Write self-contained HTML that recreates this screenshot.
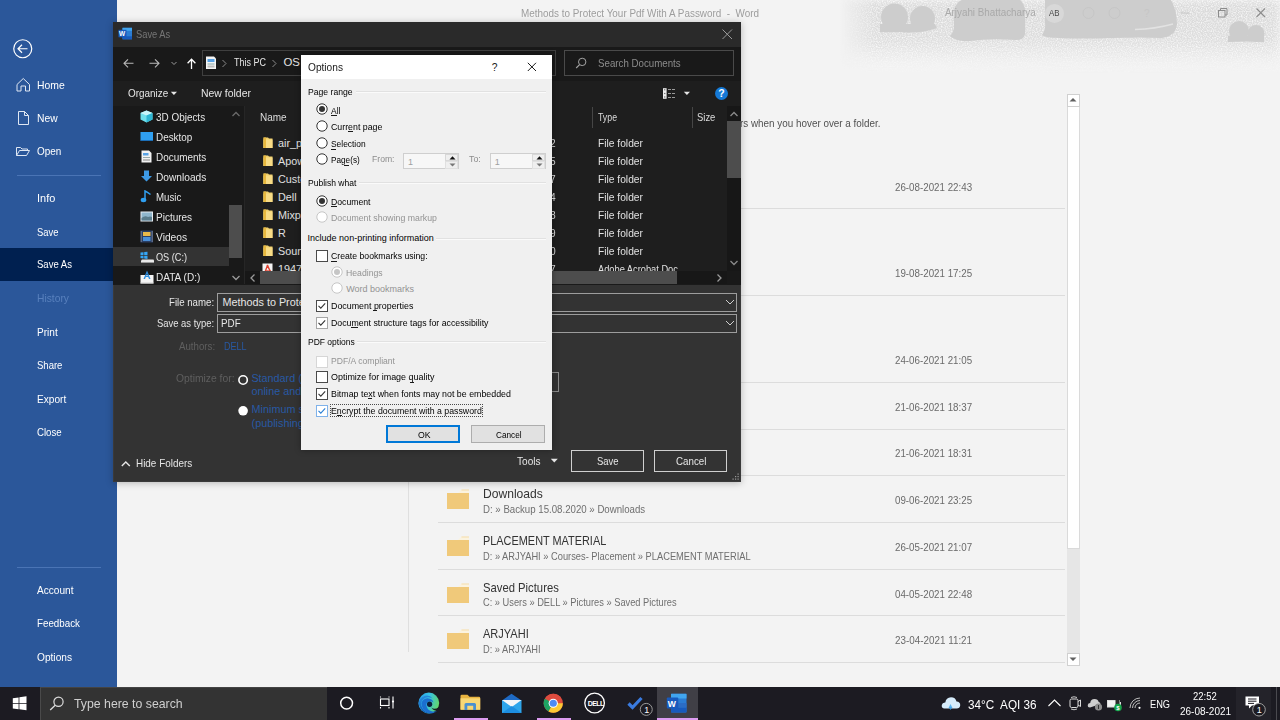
<!DOCTYPE html>
<html><head><meta charset="utf-8"><style>
*{margin:0;padding:0;box-sizing:border-box}
html,body{width:1280px;height:720px;overflow:hidden;background:#f3f3f3;font-family:"Liberation Sans",sans-serif}
.t{position:absolute;white-space:pre;line-height:1}
.r{position:absolute}
.clip{position:absolute;overflow:hidden}
</style></head><body>
<svg class="r" style="left:840px;top:0px" width="440" height="75" viewBox="0 0 440 75">
<defs><filter id="bl" x="-10%" y="-10%" width="120%" height="120%"><feGaussianBlur stdDeviation="0.5"/></filter>
<filter id="bl2"><feGaussianBlur stdDeviation="4"/></filter>
<linearGradient id="fadeg" x1="0" y1="0" x2="0" y2="1"><stop offset="0" stop-color="#d9d9d9"/><stop offset="0.6" stop-color="#dedede"/><stop offset="1" stop-color="#f3f3f3"/></linearGradient>
<linearGradient id="fadeh" x1="0" y1="0" x2="1" y2="0"><stop offset="0" stop-color="#fff" stop-opacity="0"/><stop offset="0.08" stop-color="#fff" stop-opacity="1"/></linearGradient>
<mask id="mh"><rect x="0" y="0" width="440" height="75" fill="url(#fadeh)"/></mask></defs>
<filter id="nz" x="0" y="0" width="100%" height="100%"><feTurbulence type="fractalNoise" baseFrequency="0.8" numOctaves="1" seed="3"/><feColorMatrix values="0 0 0 0 1  0 0 0 0 1  0 0 0 0 1  0 0 0 -2.2 1.35"/></filter>
<linearGradient id="nzg" x1="0" y1="0" x2="0" y2="1"><stop offset="0" stop-color="#fff" stop-opacity="0.9"/><stop offset="0.7" stop-color="#fff" stop-opacity="0.8"/><stop offset="1" stop-color="#fff" stop-opacity="0.1"/></linearGradient>
<mask id="mnz"><rect x="0" y="0" width="440" height="75" fill="url(#nzg)"/></mask>
<g mask="url(#mh)"><path d="M0 0 H440 V62 Q300 70 150 64 Q60 58 0 62 Z" fill="url(#fadeg)" filter="url(#bl2)"/></g>
<g mask="url(#mh)"><rect x="0" y="0" width="440" height="72" filter="url(#nz)" mask="url(#mnz)"/></g>
<g fill="#cdcdcd" filter="url(#bl)">
<circle cx="54.5" cy="17" r="13.5"/><circle cx="82.5" cy="18.5" r="12.5"/>
<path d="M40 24 H95 L97 28 Q80 34 60 32 Q46 32 40 32 Z"/>
<path d="M128 -2 H178 Q186 4 185 14 V34 Q184 40 176 40 Q150 38 130 41 Q116 42 110 36 Q114 32 114 26 V12 Q115 0 128 -2 Z"/>
<path d="M205 -2 H330 Q337 10 337 24 Q336 36 322 38 Q300 37 270 38 Q240 39 220 38 Q205 38 202 35 Q206 30 205 22 Z"/>
<circle cx="399" cy="31" r="10"/><circle cx="416" cy="33.5" r="8.5"/>
<path d="M388 36 H424 V42 Q405 41 388 42 Z"/>
</g>
<path d="M295 29.5 Q315 29 333 24" stroke="#e2e2e2" stroke-width="1.3" fill="none"/>
</svg>
<div id="t0" class="t " style="left:520.60px;top:7.67px;font-size:10.9px;color:#9d9d9d;transform:scaleX(0.9091);transform-origin:0 0;">Methods to Protect Your Pdf With A Password  -  Word</div>
<div id="t1" class="t " style="left:945.25px;top:7.27px;font-size:10.9px;color:#a9a9a9;transform:scaleX(0.9024);transform-origin:0 0;">Arjyahi Bhattacharya</div>
<div class="r" style="left:1045px;top:3.5px;width:19px;height:19px;border-radius:50%;background:#d8d8d8"></div>
<div id="t2" class="t " style="left:1049.20px;top:9.22px;font-size:8.6px;color:#4a4a4a;transform:scaleX(0.9202);transform-origin:0 0;">AB</div>
<svg class="r" style="left:1082px;top:6px;" width="80" height="14" viewBox="0 0 80 14"><circle cx="6.5" cy="7" r="5.5" fill="none" stroke="#c6c6c6"/><circle cx="32.5" cy="7" r="5.5" fill="none" stroke="#c6c6c6"/><text x="62" y="11" font-size="10" fill="#c6c6c6" font-family="Liberation Sans">?</text></svg>
<svg class="r" style="left:1176px;top:4px;" width="100" height="18" viewBox="0 0 100 18"><line x1="4.5" y1="9" x2="13.5" y2="9" stroke="#c4c4c4"/><rect x="42.5" y="6.5" width="6.5" height="6.5" fill="none" stroke="#8c8c8c"/><path d="M44.5 6.5 V4.5 H51 V11 H49" fill="none" stroke="#8c8c8c"/><path d="M80.5 4.5 L89 13 M89 4.5 L80.5 13" stroke="#8c8c8c" stroke-width="1.1"/></svg>
<div class="r" style="left:438px;top:208px;width:627px;height:1px;background:#dcdcdc;"></div>
<div class="r" style="left:438px;top:295px;width:627px;height:1px;background:#dcdcdc;"></div>
<div class="r" style="left:438px;top:382px;width:627px;height:1px;background:#dcdcdc;"></div>
<div class="r" style="left:438px;top:429px;width:627px;height:1px;background:#dcdcdc;"></div>
<div class="r" style="left:438px;top:475px;width:627px;height:1px;background:#dcdcdc;"></div>
<div class="r" style="left:438px;top:522px;width:627px;height:1px;background:#dcdcdc;"></div>
<div class="r" style="left:438px;top:569px;width:627px;height:1px;background:#dcdcdc;"></div>
<div class="r" style="left:438px;top:615px;width:627px;height:1px;background:#dcdcdc;"></div>
<div class="r" style="left:438px;top:662px;width:627px;height:1px;background:#dcdcdc;"></div>
<div class="r" style="left:408px;top:120px;width:1px;height:532px;background:#dfdfdf;"></div>
<div id="t3" class="t " style="left:740.20px;top:117.76px;font-size:10.8px;color:#505050;transform:scaleX(0.9144);transform-origin:0 0;">rs when you hover over a folder.</div>
<div id="t4" class="t " style="left:894.60px;top:182.88px;font-size:10.3px;color:#6a6a6a;transform:scaleX(0.9480);transform-origin:0 0;">26-08-2021 22:43</div>
<div id="t5" class="t " style="left:894.60px;top:269.28px;font-size:10.3px;color:#6a6a6a;transform:scaleX(0.9480);transform-origin:0 0;">19-08-2021 17:25</div>
<div id="t6" class="t " style="left:894.60px;top:356.08px;font-size:10.3px;color:#6a6a6a;transform:scaleX(0.9480);transform-origin:0 0;">24-06-2021 21:05</div>
<div id="t7" class="t " style="left:894.60px;top:402.68px;font-size:10.3px;color:#6a6a6a;transform:scaleX(0.9480);transform-origin:0 0;">21-06-2021 18:37</div>
<div id="t8" class="t " style="left:894.60px;top:449.28px;font-size:10.3px;color:#6a6a6a;transform:scaleX(0.9480);transform-origin:0 0;">21-06-2021 18:31</div>
<div id="t9" class="t " style="left:894.60px;top:496.03px;font-size:10.3px;color:#6a6a6a;transform:scaleX(0.9480);transform-origin:0 0;">09-06-2021 23:25</div>
<div id="t10" class="t " style="left:894.60px;top:542.88px;font-size:10.3px;color:#6a6a6a;transform:scaleX(0.9480);transform-origin:0 0;">26-05-2021 21:07</div>
<div id="t11" class="t " style="left:894.60px;top:589.58px;font-size:10.3px;color:#6a6a6a;transform:scaleX(0.9480);transform-origin:0 0;">04-05-2021 22:48</div>
<div id="t12" class="t " style="left:894.60px;top:636.28px;font-size:10.3px;color:#6a6a6a;transform:scaleX(0.9571);transform-origin:0 0;">23-04-2021 11:21</div>
<svg class="r" style="left:447px;top:489.0px;" width="23" height="21" viewBox="0 0 23 21"><path d="M0 4 H22 V20 H0 Z" fill="#f0c97a"/><path d="M11 4 L14.5 0.5 H22 V4 Z" fill="#fbf3df"/><path d="M14.5 0.5 H22 V1.5 H14.5 Z" fill="#f0c97a" opacity="0.5"/></svg>
<div id="t13" class="t " style="left:483.10px;top:488.07px;font-size:12.2px;color:#333333;transform:scaleX(0.9925);transform-origin:0 0;">Downloads</div>
<div id="t14" class="t " style="left:483.10px;top:503.77px;font-size:10.6px;color:#6f6f6f;transform:scaleX(0.9118);transform-origin:0 0;">D: » Backup 15.08.2020 » Downloads</div>
<svg class="r" style="left:447px;top:535.75px;" width="23" height="21" viewBox="0 0 23 21"><path d="M0 4 H22 V20 H0 Z" fill="#f0c97a"/><path d="M11 4 L14.5 0.5 H22 V4 Z" fill="#fbf3df"/><path d="M14.5 0.5 H22 V1.5 H14.5 Z" fill="#f0c97a" opacity="0.5"/></svg>
<div id="t15" class="t " style="left:483.10px;top:534.82px;font-size:12.2px;color:#333333;transform:scaleX(0.8950);transform-origin:0 0;">PLACEMENT MATERIAL</div>
<div id="t16" class="t " style="left:483.10px;top:550.52px;font-size:10.6px;color:#6f6f6f;transform:scaleX(0.8776);transform-origin:0 0;">D: » ARJYAHI » Courses- Placement » PLACEMENT MATERIAL</div>
<svg class="r" style="left:447px;top:582.5px;" width="23" height="21" viewBox="0 0 23 21"><path d="M0 4 H22 V20 H0 Z" fill="#f0c97a"/><path d="M11 4 L14.5 0.5 H22 V4 Z" fill="#fbf3df"/><path d="M14.5 0.5 H22 V1.5 H14.5 Z" fill="#f0c97a" opacity="0.5"/></svg>
<div id="t17" class="t " style="left:483.10px;top:581.57px;font-size:12.2px;color:#333333;transform:scaleX(0.9246);transform-origin:0 0;">Saved Pictures</div>
<div id="t18" class="t " style="left:483.10px;top:597.27px;font-size:10.6px;color:#6f6f6f;transform:scaleX(0.8762);transform-origin:0 0;">C: » Users » DELL » Pictures » Saved Pictures</div>
<svg class="r" style="left:447px;top:629.25px;" width="23" height="21" viewBox="0 0 23 21"><path d="M0 4 H22 V20 H0 Z" fill="#f0c97a"/><path d="M11 4 L14.5 0.5 H22 V4 Z" fill="#fbf3df"/><path d="M14.5 0.5 H22 V1.5 H14.5 Z" fill="#f0c97a" opacity="0.5"/></svg>
<div id="t19" class="t " style="left:483.10px;top:628.32px;font-size:12.2px;color:#333333;transform:scaleX(0.9050);transform-origin:0 0;">ARJYAHI</div>
<div id="t20" class="t " style="left:483.10px;top:644.02px;font-size:10.6px;color:#6f6f6f;transform:scaleX(0.8768);transform-origin:0 0;">D: » ARJYAHI</div>
<div class="r" style="left:1067px;top:94px;width:12.5px;height:571px;background:#e6e6e6;"></div>
<div class="r" style="left:1066.5px;top:93.5px;width:13px;height:455px;background:#ffffff;border:1px solid #dadada"></div>
<div class="r" style="left:1066.5px;top:93.5px;width:13px;height:13px;background:#ffffff;border:1px solid #d0d0d0"></div>
<div class="r" style="left:1066.5px;top:652.5px;width:13px;height:13px;background:#ffffff;border:1px solid #d0d0d0"></div>
<svg class="r" style="left:1067px;top:94px;" width="12" height="12" viewBox="0 0 12 12"><path d="M2.5 7.5 L6 4 L9.5 7.5 Z" fill="#606060"/></svg>
<svg class="r" style="left:1067px;top:653px;" width="12" height="12" viewBox="0 0 12 12"><path d="M2.5 4.5 L6 8 L9.5 4.5 Z" fill="#606060"/></svg>
<div class="r" style="left:0px;top:0px;width:116.5px;height:687px;background:#2b579a;"></div>
<div class="r" style="left:0px;top:248px;width:116.5px;height:33px;background:#002050;"></div>
<svg class="r" style="left:12px;top:38px;" width="22" height="22" viewBox="0 0 22 22"><circle cx="10.75" cy="10.75" r="9" fill="none" stroke="#fff" stroke-width="1.2"/><path d="M6 10.75 H15.5 M10 6.75 L6 10.75 L10 14.75" fill="none" stroke="#fff" stroke-width="1.2"/></svg>
<svg class="r" style="left:15px;top:76px;" width="18" height="18" viewBox="0 0 18 18"><path d="M2 8.5 L8.25 2.5 L14.5 8.5 V15 H10.5 V10 H6 V15 H2 Z" fill="none" stroke="#dfe7f3" stroke-width="1"/></svg>
<svg class="r" style="left:16px;top:109px;" width="16" height="18" viewBox="0 0 16 18"><path d="M2.5 2.5 H8.5 L12.5 6.5 V15.5 H2.5 Z M8.5 2.5 V6.5 H12.5" fill="none" stroke="#dfe7f3" stroke-width="1"/></svg>
<svg class="r" style="left:15px;top:145px;" width="18" height="14" viewBox="0 0 18 14"><path d="M1.5 10.5 V2.5 H5.5 L7 4 H12.5 V5.5 M1.5 10.5 L4.5 5.5 H14.5 L11.5 10.5 Z" fill="none" stroke="#dfe7f3" stroke-width="1"/></svg>
<div class="r" style="left:16.5px;top:174.5px;width:84px;height:1.2px;background:#4a74b5;"></div>
<div class="r" style="left:16.5px;top:566.5px;width:84px;height:1.2px;background:#4a74b5;"></div>
<div id="t21" class="t " style="left:36.60px;top:79.86px;font-size:10.8px;color:#fff;transform:scaleX(0.9623);transform-origin:0 0;">Home</div>
<div id="t22" class="t " style="left:36.60px;top:112.86px;font-size:10.8px;color:#fff;transform:scaleX(0.9543);transform-origin:0 0;">New</div>
<div id="t23" class="t " style="left:36.60px;top:146.16px;font-size:10.8px;color:#fff;transform:scaleX(0.9195);transform-origin:0 0;">Open</div>
<div id="t24" class="t " style="left:36.60px;top:193.36px;font-size:10.8px;color:#fff;transform:scaleX(1.0139);transform-origin:0 0;">Info</div>
<div id="t25" class="t " style="left:36.60px;top:226.86px;font-size:10.8px;color:#fff;transform:scaleX(0.8699);transform-origin:0 0;">Save</div>
<div id="t26" class="t " style="left:36.60px;top:258.86px;font-size:10.8px;color:#fff;transform:scaleX(0.8812);transform-origin:0 0;">Save As</div>
<div id="t27" class="t " style="left:36.60px;top:292.86px;font-size:10.8px;color:#5880bd;transform:scaleX(0.9516);transform-origin:0 0;">History</div>
<div id="t28" class="t " style="left:36.60px;top:326.86px;font-size:10.8px;color:#fff;transform:scaleX(0.9325);transform-origin:0 0;">Print</div>
<div id="t29" class="t " style="left:36.60px;top:360.06px;font-size:10.8px;color:#fff;transform:scaleX(0.8821);transform-origin:0 0;">Share</div>
<div id="t30" class="t " style="left:36.60px;top:393.86px;font-size:10.8px;color:#fff;transform:scaleX(0.9356);transform-origin:0 0;">Export</div>
<div id="t31" class="t " style="left:36.60px;top:427.06px;font-size:10.8px;color:#fff;transform:scaleX(0.8937);transform-origin:0 0;">Close</div>
<div id="t32" class="t " style="left:36.60px;top:585.16px;font-size:10.8px;color:#fff;transform:scaleX(0.9357);transform-origin:0 0;">Account</div>
<div id="t33" class="t " style="left:36.60px;top:618.36px;font-size:10.8px;color:#fff;transform:scaleX(0.9064);transform-origin:0 0;">Feedback</div>
<div id="t34" class="t " style="left:36.60px;top:652.16px;font-size:10.8px;color:#fff;transform:scaleX(0.9407);transform-origin:0 0;">Options</div>
<div class="r" style="left:0px;top:687px;width:1280px;height:33px;background:#1c1b22;"></div>
<div class="r" style="left:40px;top:687px;width:286.5px;height:33px;background:#333333;border-left:1px solid #4a4a4a;border-top:1px solid #444"></div>
<svg class="r" style="left:12px;top:696px;" width="16" height="15" viewBox="0 0 16 15"><path d="M0.8 2.2 L6.6 1.4 V6.9 H0.8 Z M7.4 1.3 L14.5 0.3 V6.9 H7.4 Z M0.8 7.7 H6.6 V13.2 L0.8 12.4 Z M7.4 7.7 H14.5 V14.3 L7.4 13.3 Z" fill="#fff"/></svg>
<svg class="r" style="left:49px;top:696px;" width="16" height="15" viewBox="0 0 16 15"><circle cx="9.5" cy="5.8" r="4.6" fill="none" stroke="#ddd" stroke-width="1.2"/><path d="M6.2 9.2 L1.2 14" stroke="#ddd" stroke-width="1.3"/></svg>
<div id="t35" class="t " style="left:74.20px;top:696.92px;font-size:13.2px;color:#cfcfcf;transform:scaleX(0.9322);transform-origin:0 0;">Type here to search</div>
<svg class="r" style="left:338px;top:695px;" width="18" height="18" viewBox="0 0 18 18"><circle cx="8.6" cy="8.1" r="5.9" fill="none" stroke="#fff" stroke-width="1.5"/></svg>
<svg class="r" style="left:378px;top:695px;" width="18" height="16" viewBox="0 0 18 16"><rect x="2.5" y="4" width="8.5" height="6.5" fill="none" stroke="#fff" stroke-width="1.1"/><path d="M2.5 1.5 V2.5 M11 1.5 V2.5 M2.5 12 V13.5 M11 12 V13.5 M15 1.5 V13.5" stroke="#fff" stroke-width="1.1"/><circle cx="15" cy="6.5" r="1.1" fill="#fff"/></svg>
<svg class="r" style="left:418px;top:692px;" width="22" height="22" viewBox="0 0 22 22"><defs><linearGradient id="eg1" x1="0" y1="0.2" x2="1" y2="0.5"><stop offset="0" stop-color="#2aa0e8"/><stop offset="0.45" stop-color="#36c3e6"/><stop offset="1" stop-color="#62d56a"/></linearGradient><linearGradient id="eg2" x1="0" y1="0" x2="0.4" y2="1"><stop offset="0" stop-color="#2b93e6"/><stop offset="1" stop-color="#0f56b0"/></linearGradient></defs><circle cx="10.8" cy="11" r="10.4" fill="url(#eg1)"/><path d="M0.6 12 Q1 5.5 7 3.8 Q12 2.8 14.5 6.5 Q9 3.5 5 7.5 Q2 11 4 15.5 Q6.5 20.5 12.5 21.2 Q16.5 21.3 19.2 18.8 Q16.5 21.8 11 21.5 Q3 21 0.6 12 Z" fill="url(#eg2)"/><path d="M3.5 11.5 Q4.5 6.5 9.5 6.2 Q14.5 6.5 15.5 10.5 Q13 8.5 10.5 9.5 Q8 10.8 8.5 14 Q9.5 18.5 14.5 19.5 Q17.5 19.8 19.5 18.2 Q16 21.5 11.5 21.2 Q4 20.5 3.5 11.5 Z" fill="#1b6fd0"/><ellipse cx="11.6" cy="12.3" rx="2.6" ry="2.7" fill="#0c1f3f"/><path d="M22 12.2 Q21.2 16.6 16.5 16.8 Q14.6 16.8 13.4 15.6 Q15.2 18.9 19.3 18.9 Q21.6 16.2 22 12.2 Z" fill="#1c1b22"/></svg>
<svg class="r" style="left:460px;top:694px;" width="21" height="17" viewBox="0 0 21 17"><path d="M0.5 2 Q0.5 0.8 1.8 0.8 H7.5 L9.5 2.8 H19 Q20.2 2.8 20.2 4 V15.5 H0.5 Z" fill="#e8b440"/><rect x="0.5" y="4.3" width="19.7" height="11.5" fill="#f8d775"/><path d="M4.5 16 V10.5 Q4.5 9 6 9 H14.5 Q16 9 16 10.5 V16 H13.2 V11.8 H7.3 V16 Z" fill="#4a90d0"/></svg>
<div class="r" style="left:454px;top:718px;width:34px;height:2px;background:#dc9cf0;"></div>
<svg class="r" style="left:501px;top:693px;" width="22" height="21" viewBox="0 0 22 21"><path d="M1 7.5 L10.5 0.8 L20.5 7.5 Z" fill="#1e6ac4"/><rect x="1" y="7" width="19.5" height="13" fill="#2ea5ea"/><path d="M1 7 L10.75 14 L20.5 7 Z" fill="#f3f5f8"/><path d="M1 20 L10.75 13 L20.5 20 Z" fill="#1d8ee0"/></svg>
<svg class="r" style="left:543px;top:693px;" width="21" height="21" viewBox="0 0 21 21"><circle cx="10.25" cy="10.25" r="9.6" fill="#dd4b3e"/><path d="M10.25 10.25 L1.9 5.5 A9.6 9.6 0 0 0 5.5 18.6 Z" fill="#1da362"/><path d="M10.25 10.25 L5.5 18.6 A9.6 9.6 0 0 0 19.85 10.25 H10.25 Z" fill="#fcc934"/><path d="M10.25 10.25 L1.9 5.5 A9.6 9.6 0 0 1 18.6 5.5 L10.25 5.5" fill="#dd4b3e"/><circle cx="10.25" cy="10.25" r="4.6" fill="#fff"/><circle cx="10.25" cy="10.25" r="3.6" fill="#4c8bf5"/></svg>
<div class="r" style="left:537px;top:718px;width:34px;height:2px;background:#dc9cf0;"></div>
<svg class="r" style="left:583px;top:692px;" width="23" height="22" viewBox="0 0 23 22"><circle cx="11.6" cy="11" r="9.8" fill="none" stroke="#fff" stroke-width="1.3"/><text x="4.8" y="13.6" font-size="7" font-weight="bold" fill="#fff" font-family="Liberation Sans" letter-spacing="-0.6">DELL</text></svg>
<svg class="r" style="left:626px;top:695px;" width="28" height="22" viewBox="0 0 28 22"><path d="M2.5 8.5 L6.5 12.5 L15.5 3" fill="none" stroke="#3a7be0" stroke-width="3.2"/><circle cx="20.25" cy="14.4" r="6" fill="#1c1b22" stroke="#9a9a9a" stroke-width="1"/><text x="18.2" y="18" font-size="9" fill="#fff" font-family="Liberation Sans">1</text></svg>
<div class="r" style="left:657px;top:687px;width:41px;height:33px;background:#403f46;"></div>
<div class="r" style="left:657px;top:718px;width:41px;height:2px;background:#dc9cf0;"></div>
<svg class="r" style="left:666px;top:693px;" width="22" height="20" viewBox="0 0 22 20"><rect x="5" y="0.8" width="15.5" height="18.7" rx="1" fill="#2b7cd3"/><rect x="5" y="0.8" width="15.5" height="4.7" fill="#41a5ee"/><rect x="5" y="10" width="15.5" height="4.7" fill="#2b6cc4"/><rect x="5" y="14.7" width="15.5" height="4.8" fill="#185abd"/><rect x="0.8" y="4.5" width="11.5" height="11" rx="1" fill="#185abd"/><text x="1.8" y="13.5" font-size="8.6" font-weight="bold" fill="#fff" font-family="Liberation Sans">W</text></svg>
<svg class="r" style="left:941px;top:696px;" width="20" height="15" viewBox="0 0 20 15"><path d="M3.5 12.5 Q0.3 12.3 0.8 9 Q1.3 6.3 4.3 6.5 Q5 1.5 10 1.2 Q14.5 1.3 15.5 5.5 Q19.5 5.8 19.2 9.5 Q18.8 12.6 15.5 12.5 Z" fill="#d6ecfb"/><path d="M9.5 8 L7.5 12 H11.5 Z" fill="#5bb4f0"/><path d="M9.5 14 L8 11.5 H11 Z" fill="#3a9be0"/></svg>
<div id="t36" class="t " style="left:967.50px;top:697.58px;font-size:13.6px;color:#ffffff;transform:scaleX(0.8625);transform-origin:0 0;">34°C  AQI 36</div>
<svg class="r" style="left:1047px;top:698px;" width="15" height="10" viewBox="0 0 15 10"><path d="M1.5 8 L7.5 2 L13.5 8" fill="none" stroke="#fff" stroke-width="1.1"/></svg>
<svg class="r" style="left:1068px;top:696px;" width="14" height="15" viewBox="0 0 14 15"><rect x="2" y="3" width="8" height="8.5" rx="1.5" fill="none" stroke="#ddd" stroke-width="1"/><path d="M10 5.5 L12.5 4 V10.5 L10 9" fill="none" stroke="#ddd" stroke-width="1"/><path d="M3 1.5 Q6 0 9 1.5 M3 13 Q6 14.5 9 13" fill="none" stroke="#ddd" stroke-width="0.9"/></svg>
<svg class="r" style="left:1087px;top:697px;" width="16" height="14" viewBox="0 0 16 14"><path d="M3 10.5 Q0.5 10.5 0.8 8 Q1 6 3.2 6 Q3.7 2.2 7.5 2 Q11 2 11.7 5 Q13.5 5.3 13.5 7" fill="#cfcfcf"/><circle cx="11.5" cy="10" r="3.6" fill="#8d8d8d"/><rect x="11" y="8" width="1" height="4" fill="#333"/></svg>
<svg class="r" style="left:1106px;top:698px;" width="18" height="14" viewBox="0 0 18 14"><rect x="1.5" y="2.5" width="12" height="6.5" fill="#f2f2f2" stroke="#ddd"/><rect x="13.5" y="4" width="1.5" height="3.5" fill="#ddd"/><rect x="9.5" y="2" width="4" height="7.5" fill="#2a2a2a"/><circle cx="12" cy="9.5" r="3.8" fill="#16a34a"/><text x="10.2" y="12" font-size="6" fill="#fff" font-family="Liberation Sans" font-weight="bold">$</text></svg>
<svg class="r" style="left:1129px;top:697px;" width="13" height="13" viewBox="0 0 13 13"><path d="M1 11 A10 10 0 0 1 11 1 M3.5 11 A7.5 7.5 0 0 1 11 3.5 M6 11 A5 5 0 0 1 11 6" fill="none" stroke="#bdbdbd" stroke-width="1"/><circle cx="10.5" cy="10.8" r="1.1" fill="#fff"/></svg>
<div id="t37" class="t " style="left:1150.00px;top:700.08px;font-size:10.3px;color:#ffffff;transform:scaleX(0.8979);transform-origin:0 0;">ENG</div>
<div id="t38" class="t " style="left:1193.10px;top:690.97px;font-size:10.9px;color:#ffffff;transform:scaleX(0.8678);transform-origin:0 0;">22:52</div>
<div id="t39" class="t " style="left:1179.80px;top:706.17px;font-size:10.9px;color:#ffffff;transform:scaleX(0.9171);transform-origin:0 0;">26-08-2021</div>
<div class="r" style="left:1236px;top:687px;width:35px;height:33px;background:#24232a;"></div>
<svg class="r" style="left:1244px;top:695px;" width="26" height="22" viewBox="0 0 26 22"><path d="M1.5 1.5 H15 V10.5 H8 L5 13.5 V10.5 H1.5 Z" fill="#fff"/><path d="M4 4 H12.5 M4 6.2 H12.5 M4 8.4 H10" stroke="#1c1b22" stroke-width="1"/><circle cx="15" cy="14.7" r="6.3" fill="#1c1b22" stroke="#a0a0a0" stroke-width="1"/><text x="12.8" y="18.3" font-size="9" fill="#fff" font-family="Liberation Sans">1</text></svg>
<div class="r" style="left:1276px;top:687px;width:1px;height:33px;background:#4a4a4f;"></div>
<div class="r" style="left:113px;top:22px;width:628px;height:459.5px;background:#333333;box-shadow:0 1px 7px rgba(0,0,0,0.26);border:1px solid #3a3a3a"></div>
<div class="r" style="left:113px;top:22px;width:628px;height:24.5px;background:#2a2a2a;"></div>
<div class="r" style="left:113px;top:46.5px;width:628px;height:34px;background:#191919;"></div>
<div class="r" style="left:113px;top:80.5px;width:628px;height:25.5px;background:#1e1e1e;"></div>
<div class="r" style="left:113px;top:106px;width:130.5px;height:179px;background:#191919;"></div>
<div class="r" style="left:243.5px;top:106px;width:1px;height:179px;background:#262626;"></div>
<div class="r" style="left:244.5px;top:106px;width:496.5px;height:179px;background:#1e1e1e;"></div>
<svg class="r" style="left:118px;top:27px;" width="15" height="13" viewBox="0 0 15 13"><rect x="4.5" y="0.8" width="9.5" height="11.5" fill="#2b7cd3"/><rect x="4.5" y="0.8" width="9.5" height="3" fill="#41a5ee"/><rect x="4.5" y="9.3" width="9.5" height="3" fill="#185abd"/><rect x="0.5" y="2.8" width="8" height="7.5" fill="#185abd"/><text x="1" y="9" font-size="6.5" font-weight="bold" fill="#fff" font-family="Liberation Sans">W</text></svg>
<div id="t40" class="t " style="left:135.80px;top:29.22px;font-size:10.6px;color:#767676;transform:scaleX(0.8811);transform-origin:0 0;">Save As</div>
<svg class="r" style="left:721px;top:28px;" width="13" height="13" viewBox="0 0 13 13"><path d="M1.5 1.5 L11 11 M11 1.5 L1.5 11" stroke="#9a9a9a" stroke-width="1"/></svg>
<svg class="r" style="left:121px;top:56px;" width="80" height="15" viewBox="0 0 80 15"><path d="M3 7.3 H12.5 M7 3.3 L3 7.3 L7 11.3" fill="none" stroke="#b9b9b9" stroke-width="1.1"/><path d="M28.5 7.3 H38 M34 3.3 L38 7.3 L34 11.3" fill="none" stroke="#b9b9b9" stroke-width="1.1"/><path d="M50.5 6 L53 8.5 L55.5 6" fill="none" stroke="#9a9a9a" stroke-width="1"/><path d="M70.5 13 V3.5 M66.6 7.3 L70.5 3.3 L74.4 7.3" fill="none" stroke="#fff" stroke-width="1.3"/></svg>
<div class="r" style="left:202px;top:50px;width:354px;height:26px;background:transparent;border:1px solid #3f3f3f"></div>
<svg class="r" style="left:205px;top:56px;" width="12" height="14" viewBox="0 0 12 14"><path d="M1 0.5 H9 L11 2.5 V13 H1 Z" fill="#f4f4f4"/><rect x="2.5" y="3" width="7" height="3" fill="#59a3e6"/><rect x="2.5" y="7.5" width="7" height="1" fill="#8aa"/><rect x="2.5" y="9.5" width="7" height="2" fill="#bbb"/></svg>
<svg class="r" style="left:220px;top:58px;" width="8" height="12" viewBox="0 0 8 12"><path d="M2.5 2 L6 5.5 L2.5 9" fill="none" stroke="#8a8a8a" stroke-width="1"/></svg>
<div id="t41" class="t " style="left:234.20px;top:57.25px;font-size:11.4px;color:#e6e6e6;transform:scaleX(0.7881);transform-origin:0 0;">This PC</div>
<svg class="r" style="left:270px;top:58px;" width="8" height="12" viewBox="0 0 8 12"><path d="M2.5 2 L6 5.5 L2.5 9" fill="none" stroke="#8a8a8a" stroke-width="1"/></svg>
<div id="t42" class="t " style="left:283.40px;top:57.25px;font-size:11.4px;color:#e6e6e6;">OS (C:)</div>
<div class="r" style="left:564px;top:50px;width:169.5px;height:26px;background:transparent;border:1px solid #4a4a4a"></div>
<svg class="r" style="left:575px;top:57px;" width="13" height="13" viewBox="0 0 13 13"><circle cx="7.2" cy="4.9" r="3.7" fill="none" stroke="#a5a5a5" stroke-width="1"/><path d="M4.6 7.6 L1.2 11" stroke="#a5a5a5" stroke-width="1.1"/></svg>
<div id="t43" class="t " style="left:598.00px;top:57.76px;font-size:10.8px;color:#8c8c8c;transform:scaleX(0.9004);transform-origin:0 0;">Search Documents</div>
<div id="t44" class="t " style="left:127.50px;top:88.46px;font-size:10.8px;color:#e6e6e6;transform:scaleX(0.9174);transform-origin:0 0;">Organize</div>
<svg class="r" style="left:170px;top:91px;" width="8" height="5" viewBox="0 0 8 5"><path d="M0.8 0.8 H7 L3.9 4 Z" fill="#e6e6e6"/></svg>
<div id="t45" class="t " style="left:200.60px;top:88.46px;font-size:10.8px;color:#e6e6e6;transform:scaleX(0.9675);transform-origin:0 0;">New folder</div>
<svg class="r" style="left:662px;top:87px;" width="16" height="13" viewBox="0 0 16 13"><rect x="1" y="1.2" width="3.6" height="10.6" fill="#eee"/><path d="M2.8 2.2 V3.4 M2.8 5.9 V7.1 M2.8 9.4 V10.6" stroke="#333" stroke-width="0.9"/><path d="M6 2.5 H13.5 M6 6.5 H13.5 M6 10.5 H13.5" stroke="#9a9a9a" stroke-width="1" stroke-dasharray="3 1"/></svg>
<svg class="r" style="left:683px;top:91px;" width="8" height="5" viewBox="0 0 8 5"><path d="M0.8 0.8 H7 L3.9 4 Z" fill="#e6e6e6"/></svg>
<div class="r" style="left:714.5px;top:86.5px;width:13.4px;height:13.4px;border-radius:50%;background:#1579d6"></div>
<div id="t46" class="t " style="left:718.20px;top:88.41px;font-size:10.5px;color:#ffffff;font-weight:700;">?</div>
<div class="r" style="left:113px;top:247px;width:115.5px;height:19px;background:#333333;"></div>
<div class="r" style="left:229px;top:205px;width:13px;height:53px;background:#4d4d4d;"></div>
<svg class="r" style="left:231px;top:110px;" width="10" height="8" viewBox="0 0 10 8"><path d="M1.5 6 L5 2.5 L8.5 6" fill="none" stroke="#6a6a6a" stroke-width="1.3"/></svg>
<svg class="r" style="left:231px;top:274px;" width="10" height="8" viewBox="0 0 10 8"><path d="M1.5 2 L5 5.5 L8.5 2" fill="none" stroke="#9a9a9a" stroke-width="1.3"/></svg>
<svg class="r" style="left:139.5px;top:110.3px;" width="15" height="15" viewBox="0 0 15 15"><path d="M6.5 0.5 L12.5 3 V9.5 L6.5 12.5 L0.5 9.5 V3 Z" fill="#6fe0ec"/><path d="M0.5 3 L6.5 5.5 L12.5 3 L6.5 0.5 Z" fill="#c9f5fa"/><path d="M6.5 5.5 V12.5 L12.5 9.5 V3 Z" fill="#2fb6d3"/></svg>
<div id="t47" class="t " style="left:156.40px;top:111.66px;font-size:10.8px;color:#e6e6e6;transform:scaleX(0.9193);transform-origin:0 0;">3D Objects</div>
<svg class="r" style="left:139.5px;top:130.3px;" width="15" height="15" viewBox="0 0 15 15"><rect x="0.5" y="2" width="12.5" height="8.5" fill="#2f9ff0"/><rect x="0.5" y="10" width="12.5" height="1" fill="#1b6fb8"/></svg>
<div id="t48" class="t " style="left:156.40px;top:131.66px;font-size:10.8px;color:#e6e6e6;transform:scaleX(0.9163);transform-origin:0 0;">Desktop</div>
<svg class="r" style="left:139.5px;top:150.3px;" width="15" height="15" viewBox="0 0 15 15"><path d="M1.5 0.5 H9 L11.5 3 V12.5 H1.5 Z" fill="#f2f2f2"/><rect x="3" y="3" width="5.5" height="2.5" fill="#59a3e6"/><rect x="3" y="7" width="7" height="1" fill="#9aa"/><rect x="3" y="9" width="7" height="2" fill="#bbb"/></svg>
<div id="t49" class="t " style="left:156.40px;top:151.66px;font-size:10.8px;color:#e6e6e6;transform:scaleX(0.9210);transform-origin:0 0;">Documents</div>
<svg class="r" style="left:139.5px;top:170.3px;" width="15" height="15" viewBox="0 0 15 15"><path d="M4 0.5 H9 V6 H12 L6.5 11.5 L1 6 H4 Z" fill="#3d9ae6"/></svg>
<div id="t50" class="t " style="left:156.40px;top:171.66px;font-size:10.8px;color:#e6e6e6;transform:scaleX(0.9418);transform-origin:0 0;">Downloads</div>
<svg class="r" style="left:139.5px;top:190.3px;" width="15" height="15" viewBox="0 0 15 15"><path d="M5 10 V1 Q8 2.5 10.5 4.5" fill="none" stroke="#2f9ff0" stroke-width="1.5"/><ellipse cx="3.5" cy="10" rx="2.8" ry="2.2" fill="#2f9ff0"/></svg>
<div id="t51" class="t " style="left:156.40px;top:191.66px;font-size:10.8px;color:#e6e6e6;transform:scaleX(0.8963);transform-origin:0 0;">Music</div>
<svg class="r" style="left:139.5px;top:210.3px;" width="15" height="15" viewBox="0 0 15 15"><rect x="0.5" y="1.5" width="12.5" height="10" fill="#e8edf2"/><rect x="1.5" y="2.5" width="10.5" height="8" fill="#8fb6cc"/><path d="M1.5 8 Q5 5 8 7 Q10 6 12 7 V10.5 H1.5 Z" fill="#5b7d8c"/></svg>
<div id="t52" class="t " style="left:156.40px;top:211.66px;font-size:10.8px;color:#e6e6e6;transform:scaleX(0.9253);transform-origin:0 0;">Pictures</div>
<svg class="r" style="left:139.5px;top:230.3px;" width="15" height="15" viewBox="0 0 15 15"><rect x="0.5" y="0.5" width="12.5" height="12" fill="#2a3f66"/><rect x="3" y="2" width="7.5" height="4" fill="#e8b84a"/><rect x="3" y="7" width="7.5" height="4" fill="#4a8fd8"/><path d="M1.2 1.5 V12 M12.2 1.5 V12" stroke="#ddd" stroke-width="0.8" stroke-dasharray="1 1"/></svg>
<div id="t53" class="t " style="left:156.40px;top:231.66px;font-size:10.8px;color:#e6e6e6;transform:scaleX(0.9479);transform-origin:0 0;">Videos</div>
<svg class="r" style="left:139.5px;top:250.3px;" width="15" height="15" viewBox="0 0 15 15"><path d="M0.5 2.5 L3.5 2.2 V5 H0.5 Z M4.2 2.1 L7.5 1.7 V5 H4.2 Z M0.5 5.7 H3.5 V8.4 L0.5 8 Z M4.2 5.7 H7.5 V8.9 L4.2 8.5 Z" fill="#35a6f5"/><path d="M2 9.5 H13 Q14 9.5 14 10.5 V12 H1 V10.5 Z" fill="#e9e9e9"/><path d="M1 12 H14 V13 H1 Z" fill="#9a9a9a"/></svg>
<div id="t54" class="t " style="left:156.40px;top:251.66px;font-size:10.8px;color:#e6e6e6;transform:scaleX(0.8483);transform-origin:0 0;">OS (C:)</div>
<svg class="r" style="left:139.5px;top:270.3px;" width="15" height="15" viewBox="0 0 15 15"><rect x="0.5" y="5" width="13" height="8.5" fill="#f4f4f4"/><path d="M7 0.5 L3.5 9 H5 L5.8 7 H8.2 L9 9 H10.5 Z M6.2 5.8 L7 3.5 L7.8 5.8 Z" fill="#2f8fe0"/><rect x="0.5" y="12.5" width="13" height="1" fill="#ccc"/></svg>
<div id="t55" class="t " style="left:156.40px;top:271.66px;font-size:10.8px;color:#e6e6e6;transform:scaleX(0.9309);transform-origin:0 0;">DATA (D:)</div>
<div class="clip" style="left:244.5px;top:106px;width:482.5px;height:165px;">
<div id="t56" class="t " style="left:15.80px;top:5.86px;font-size:10.8px;color:#dcdcdc;transform:scaleX(0.9267);transform-origin:0 0;">Name</div>
<div class="r" style="left:347.5px;top:1px;width:1px;height:21px;background:#464646;"></div>
<div class="r" style="left:447.5px;top:1px;width:1px;height:21px;background:#464646;"></div>
<div id="t57" class="t " style="left:353.30px;top:5.86px;font-size:10.8px;color:#dcdcdc;transform:scaleX(0.8118);transform-origin:0 0;">Type</div>
<div id="t58" class="t " style="left:452.80px;top:5.86px;font-size:10.8px;color:#dcdcdc;transform:scaleX(0.8737);transform-origin:0 0;">Size</div>
<svg class="r" style="left:18.0px;top:30.80000000000001px;" width="10" height="12" viewBox="0 0 10 12"><path d="M0.5 0.5 H5 L6 1.5 H9.5 V11 H0.5 Z" fill="#f0cf6c"/><path d="M0.5 2.5 H9.5 V11 H0.5 Z" fill="#f8dc86"/><path d="M0.5 0.5 H3 V11 H0.5 Z" fill="#e7b83e"/></svg>
<div id="t59" class="t " style="left:353.30px;top:31.66px;font-size:10.8px;color:#e0e0e0;transform:scaleX(0.9475);transform-origin:0 0;">File folder</div>
<div id="t60" class="t " style="left:33.50px;top:31.66px;font-size:10.8px;color:#e0e0e0;">air_pollution_data</div>
<div id="t61" class="t " style="left:235.50px;top:31.66px;font-size:10.8px;color:#e0e0e0;transform:scaleX(0.8876);transform-origin:0 0;">26-08-2021 22:42</div>
<svg class="r" style="left:18.0px;top:48.80000000000001px;" width="10" height="12" viewBox="0 0 10 12"><path d="M0.5 0.5 H5 L6 1.5 H9.5 V11 H0.5 Z" fill="#f0cf6c"/><path d="M0.5 2.5 H9.5 V11 H0.5 Z" fill="#f8dc86"/><path d="M0.5 0.5 H3 V11 H0.5 Z" fill="#e7b83e"/></svg>
<div id="t62" class="t " style="left:353.30px;top:49.66px;font-size:10.8px;color:#e0e0e0;transform:scaleX(0.9475);transform-origin:0 0;">File folder</div>
<div id="t63" class="t " style="left:33.50px;top:49.66px;font-size:10.8px;color:#e0e0e0;">Apowersoft</div>
<div id="t64" class="t " style="left:235.50px;top:49.66px;font-size:10.8px;color:#e0e0e0;transform:scaleX(0.8876);transform-origin:0 0;">17-05-2021 12:15</div>
<svg class="r" style="left:18.0px;top:66.80000000000001px;" width="10" height="12" viewBox="0 0 10 12"><path d="M0.5 0.5 H5 L6 1.5 H9.5 V11 H0.5 Z" fill="#f0cf6c"/><path d="M0.5 2.5 H9.5 V11 H0.5 Z" fill="#f8dc86"/><path d="M0.5 0.5 H3 V11 H0.5 Z" fill="#e7b83e"/></svg>
<div id="t65" class="t " style="left:353.30px;top:67.66px;font-size:10.8px;color:#e0e0e0;transform:scaleX(0.9475);transform-origin:0 0;">File folder</div>
<div id="t66" class="t " style="left:33.50px;top:67.66px;font-size:10.8px;color:#e0e0e0;">Custom Office Templates</div>
<div id="t67" class="t " style="left:235.50px;top:67.66px;font-size:10.8px;color:#e0e0e0;transform:scaleX(0.8876);transform-origin:0 0;">14-06-2021 10:27</div>
<svg class="r" style="left:18.0px;top:84.80000000000001px;" width="10" height="12" viewBox="0 0 10 12"><path d="M0.5 0.5 H5 L6 1.5 H9.5 V11 H0.5 Z" fill="#f0cf6c"/><path d="M0.5 2.5 H9.5 V11 H0.5 Z" fill="#f8dc86"/><path d="M0.5 0.5 H3 V11 H0.5 Z" fill="#e7b83e"/></svg>
<div id="t68" class="t " style="left:353.30px;top:85.66px;font-size:10.8px;color:#e0e0e0;transform:scaleX(0.9475);transform-origin:0 0;">File folder</div>
<div id="t69" class="t " style="left:33.50px;top:85.66px;font-size:10.8px;color:#e0e0e0;">Dell</div>
<div id="t70" class="t " style="left:235.50px;top:85.66px;font-size:10.8px;color:#e0e0e0;transform:scaleX(0.8876);transform-origin:0 0;">08-05-2021 18:44</div>
<svg class="r" style="left:18.0px;top:102.80000000000001px;" width="10" height="12" viewBox="0 0 10 12"><path d="M0.5 0.5 H5 L6 1.5 H9.5 V11 H0.5 Z" fill="#f0cf6c"/><path d="M0.5 2.5 H9.5 V11 H0.5 Z" fill="#f8dc86"/><path d="M0.5 0.5 H3 V11 H0.5 Z" fill="#e7b83e"/></svg>
<div id="t71" class="t " style="left:353.30px;top:103.66px;font-size:10.8px;color:#e0e0e0;transform:scaleX(0.9475);transform-origin:0 0;">File folder</div>
<div id="t72" class="t " style="left:33.50px;top:103.66px;font-size:10.8px;color:#e0e0e0;">Mixpanel</div>
<div id="t73" class="t " style="left:235.50px;top:103.66px;font-size:10.8px;color:#e0e0e0;transform:scaleX(0.8961);transform-origin:0 0;">21-06-2021 11:38</div>
<svg class="r" style="left:18.0px;top:120.80000000000001px;" width="10" height="12" viewBox="0 0 10 12"><path d="M0.5 0.5 H5 L6 1.5 H9.5 V11 H0.5 Z" fill="#f0cf6c"/><path d="M0.5 2.5 H9.5 V11 H0.5 Z" fill="#f8dc86"/><path d="M0.5 0.5 H3 V11 H0.5 Z" fill="#e7b83e"/></svg>
<div id="t74" class="t " style="left:353.30px;top:121.66px;font-size:10.8px;color:#e0e0e0;transform:scaleX(0.9475);transform-origin:0 0;">File folder</div>
<div id="t75" class="t " style="left:33.50px;top:121.66px;font-size:10.8px;color:#e0e0e0;">R</div>
<div id="t76" class="t " style="left:235.50px;top:121.66px;font-size:10.8px;color:#e0e0e0;transform:scaleX(0.8876);transform-origin:0 0;">09-05-2021 18:29</div>
<svg class="r" style="left:18.0px;top:138.8px;" width="10" height="12" viewBox="0 0 10 12"><path d="M0.5 0.5 H5 L6 1.5 H9.5 V11 H0.5 Z" fill="#f0cf6c"/><path d="M0.5 2.5 H9.5 V11 H0.5 Z" fill="#f8dc86"/><path d="M0.5 0.5 H3 V11 H0.5 Z" fill="#e7b83e"/></svg>
<div id="t77" class="t " style="left:353.30px;top:139.66px;font-size:10.8px;color:#e0e0e0;transform:scaleX(0.9475);transform-origin:0 0;">File folder</div>
<div id="t78" class="t " style="left:33.50px;top:139.66px;font-size:10.8px;color:#e0e0e0;">Sound recordings</div>
<div id="t79" class="t " style="left:235.50px;top:139.66px;font-size:10.8px;color:#e0e0e0;transform:scaleX(0.8961);transform-origin:0 0;">19-06-2021 11:20</div>
<svg class="r" style="left:17.0px;top:156.8px;" width="12" height="12" viewBox="0 0 12 12"><rect x="0.5" y="0.5" width="10" height="11" fill="#f3f3f3"/><path d="M3 9 Q5 4 5.5 2 Q6 4 8.5 8.5 Q5 7 3 9 Z" fill="none" stroke="#e0412f" stroke-width="1.3"/></svg>
<div class="clip" style="left:345.5px;top:144px;width:88px;height:25px;">
<div id="t80" class="t " style="left:7.80px;top:13.66px;font-size:10.8px;color:#e0e0e0;transform:scaleX(0.8586);transform-origin:0 0;">Adobe Acrobat Document</div>
</div>
<div id="t81" class="t " style="left:33.50px;top:157.66px;font-size:10.8px;color:#e0e0e0;">1947 Partition.pdf</div>
<div id="t82" class="t " style="left:235.50px;top:157.66px;font-size:10.8px;color:#e0e0e0;transform:scaleX(0.8876);transform-origin:0 0;">21-08-2021 16:27</div>
</div>
<div class="r" style="left:727px;top:106px;width:14px;height:165px;background:#171717;"></div>
<div class="r" style="left:727px;top:120.5px;width:13.5px;height:57px;background:#4d4d4d;"></div>
<svg class="r" style="left:729px;top:110px;" width="10" height="8" viewBox="0 0 10 8"><path d="M1.5 6 L5 2.5 L8.5 6" fill="none" stroke="#8a8a8a" stroke-width="1.3"/></svg>
<svg class="r" style="left:729px;top:259px;" width="10" height="8" viewBox="0 0 10 8"><path d="M1.5 2 L5 5.5 L8.5 2" fill="none" stroke="#8a8a8a" stroke-width="1.3"/></svg>
<div class="r" style="left:244.5px;top:271px;width:482.5px;height:14px;background:#171717;"></div>
<div class="r" style="left:260px;top:271px;width:417px;height:13px;background:#4d4d4d;"></div>
<div class="r" style="left:113px;top:284px;width:628px;height:1px;background:#1a1a1a;"></div>
<div class="r" style="left:727px;top:271px;width:14px;height:14px;background:#191919;"></div>
<svg class="r" style="left:249px;top:273px;" width="8" height="10" viewBox="0 0 8 10"><path d="M5.5 1.5 L2 5 L5.5 8.5" fill="none" stroke="#9a9a9a" stroke-width="1.3"/></svg>
<svg class="r" style="left:715px;top:273px;" width="8" height="10" viewBox="0 0 8 10"><path d="M2.5 1.5 L6 5 L2.5 8.5" fill="none" stroke="#9a9a9a" stroke-width="1.3"/></svg>
<div id="t83" class="t " style="left:168.60px;top:297.26px;font-size:10.8px;color:#e6e6e6;transform:scaleX(0.8943);transform-origin:0 0;">File name:</div>
<div id="t84" class="t " style="left:156.60px;top:318.36px;font-size:10.8px;color:#e6e6e6;transform:scaleX(0.8722);transform-origin:0 0;">Save as type:</div>
<div class="r" style="left:217px;top:293px;width:520px;height:19px;background:#333333;border:1px solid #9d9d9d"></div>
<div class="r" style="left:217px;top:314px;width:520px;height:19px;background:#333333;border:1px solid #9d9d9d"></div>
<div id="t85" class="t " style="left:222.50px;top:297.26px;font-size:10.8px;color:#e6e6e6;">Methods to Protect Your Pdf With A Password</div>
<div id="t86" class="t " style="left:220.50px;top:318.36px;font-size:10.8px;color:#e6e6e6;transform:scaleX(0.9111);transform-origin:0 0;">PDF</div>
<svg class="r" style="left:725px;top:298px;" width="10" height="8" viewBox="0 0 10 8"><path d="M1 2 L5 6 L9 2" fill="none" stroke="#cfcfcf" stroke-width="1"/></svg>
<svg class="r" style="left:725px;top:319px;" width="10" height="8" viewBox="0 0 10 8"><path d="M1 2 L5 6 L9 2" fill="none" stroke="#cfcfcf" stroke-width="1"/></svg>
<div id="t87" class="t " style="left:179.00px;top:341.46px;font-size:10.8px;color:#5f5f5f;transform:scaleX(0.8970);transform-origin:0 0;">Authors:</div>
<div id="t88" class="t " style="left:224.00px;top:341.46px;font-size:10.8px;color:#2859a3;transform:scaleX(0.8378);transform-origin:0 0;">DELL</div>
<div id="t89" class="t " style="left:176.40px;top:372.86px;font-size:10.8px;color:#5f5f5f;transform:scaleX(0.9562);transform-origin:0 0;">Optimize for:</div>
<svg class="r" style="left:237px;top:373.5px;" width="12" height="12" viewBox="0 0 12 12"><circle cx="6.1" cy="6" r="4.2" fill="none" stroke="#fff" stroke-width="1.6"/></svg>
<svg class="r" style="left:237px;top:405px;" width="12" height="12" viewBox="0 0 12 12"><circle cx="6.1" cy="5.8" r="4.8" fill="#fff"/></svg>
<div id="t90" class="t " style="left:251.40px;top:372.86px;font-size:10.8px;color:#2859a3;">Standard (publishing online and printing)</div>
<div id="t91" class="t " style="left:251.40px;top:386.36px;font-size:10.8px;color:#2859a3;">online and printing)</div>
<div id="t92" class="t " style="left:251.60px;top:404.26px;font-size:10.8px;color:#2859a3;">Minimum size (publishing online)</div>
<div id="t93" class="t " style="left:251.60px;top:417.86px;font-size:10.8px;color:#2859a3;">(publishing online)</div>
<div class="r" style="left:480px;top:372px;width:78.5px;height:20px;background:transparent;border:1px solid #8a8a8a"></div>
<svg class="r" style="left:120px;top:459px;" width="12" height="9" viewBox="0 0 12 9"><path d="M1.8 7 L5.8 3 L9.8 7" fill="none" stroke="#e6e6e6" stroke-width="1.4"/></svg>
<div id="t94" class="t " style="left:135.80px;top:458.16px;font-size:10.8px;color:#e6e6e6;transform:scaleX(0.9179);transform-origin:0 0;">Hide Folders</div>
<div id="t95" class="t " style="left:516.50px;top:455.76px;font-size:10.8px;color:#e6e6e6;transform:scaleX(0.9320);transform-origin:0 0;">Tools</div>
<svg class="r" style="left:550px;top:458px;" width="9" height="6" viewBox="0 0 9 6"><path d="M0.8 0.8 H7.8 L4.3 4.5 Z" fill="#e6e6e6"/></svg>
<div class="r" style="left:570.8px;top:450.2px;width:73px;height:22px;background:transparent;border:1.5px solid #cfcfcf"></div>
<div class="r" style="left:654.2px;top:450.2px;width:73px;height:22px;background:transparent;border:1.5px solid #cfcfcf"></div>
<div id="t96" class="t " style="left:596.60px;top:455.86px;font-size:10.8px;color:#e6e6e6;transform:scaleX(0.8762);transform-origin:0 0;">Save</div>
<div id="t97" class="t " style="left:675.70px;top:455.86px;font-size:10.8px;color:#e6e6e6;transform:scaleX(0.9040);transform-origin:0 0;">Cancel</div>
<svg class="r" style="left:732px;top:473px;" width="8" height="8" viewBox="0 0 8 8"><g fill="#9a9a9a"><rect x="5.5" y="0.5" width="1.2" height="1.2"/><rect x="3" y="3" width="1.2" height="1.2"/><rect x="5.5" y="3" width="1.2" height="1.2"/><rect x="0.5" y="5.5" width="1.2" height="1.2"/><rect x="3" y="5.5" width="1.2" height="1.2"/><rect x="5.5" y="5.5" width="1.2" height="1.2"/></g></svg>
<div class="r" style="left:301px;top:54.6px;width:251px;height:395px;background:#f0f0f0;box-shadow:0 0 6px rgba(0,0,0,0.35)"></div>
<div class="r" style="left:301px;top:54.6px;width:251px;height:24.4px;background:#ffffff;"></div>
<div id="t98" class="t " style="left:307.60px;top:62.88px;font-size:10.3px;color:#1a1a1a;transform:scaleX(0.9862);transform-origin:0 0;">Options</div>
<div id="t99" class="t " style="left:491.80px;top:62.88px;font-size:10.3px;color:#1a1a1a;">?</div>
<svg class="r" style="left:526px;top:61px;" width="12" height="12" viewBox="0 0 12 12"><path d="M1.8 1.8 L10 10 M10 1.8 L1.8 10" stroke="#1a1a1a" stroke-width="1"/></svg>
<div id="t100" class="t " style="left:307.60px;top:87.88px;font-size:9px;color:#000000;transform:scaleX(0.9583);transform-origin:0 0;">Page range</div>
<div class="r" style="left:356px;top:91px;width:189.79999999999995px;height:1px;background:#e1e1e1;"></div>
<div class="r" style="left:356px;top:92px;width:189.79999999999995px;height:1px;background:#fafafa;"></div>
<svg class="r" style="left:315.9px;top:103.4px;" width="12" height="12" viewBox="0 0 12 12"><circle cx="6" cy="6" r="5.2" fill="#fff" stroke="#333333" stroke-width="1"/><circle cx="6" cy="6" r="3" fill="#333"/></svg>
<div id="t101" class="t " style="left:331.00px;top:106.68px;font-size:9px;color:#000000;transform:scaleX(0.9376);transform-origin:0 0;">All</div>
<div class="r" style="left:331px;top:115.1px;width:5.5px;height:0.9px;background:#1a1a1a;"></div>
<svg class="r" style="left:315.9px;top:119.9px;" width="12" height="12" viewBox="0 0 12 12"><circle cx="6" cy="6" r="5.2" fill="#fff" stroke="#333333" stroke-width="1"/></svg>
<div id="t102" class="t " style="left:331.00px;top:122.88px;font-size:9px;color:#000000;transform:scaleX(0.9785);transform-origin:0 0;">Current page</div>
<div class="r" style="left:347.5px;top:131.3px;width:5px;height:0.9px;background:#1a1a1a;"></div>
<svg class="r" style="left:315.9px;top:136.6px;" width="12" height="12" viewBox="0 0 12 12"><circle cx="6" cy="6" r="5.2" fill="#fff" stroke="#333333" stroke-width="1"/></svg>
<div id="t103" class="t " style="left:331.00px;top:140.08px;font-size:9px;color:#000000;transform:scaleX(0.9340);transform-origin:0 0;">Selection</div>
<div class="r" style="left:331px;top:148.5px;width:5px;height:0.9px;background:#1a1a1a;"></div>
<svg class="r" style="left:315.9px;top:153.4px;" width="12" height="12" viewBox="0 0 12 12"><circle cx="6" cy="6" r="5.2" fill="#fff" stroke="#333333" stroke-width="1"/></svg>
<div id="t104" class="t " style="left:331.00px;top:156.38px;font-size:9px;color:#000000;transform:scaleX(0.9130);transform-origin:0 0;">Page(s)</div>
<div class="r" style="left:343.5px;top:164.8px;width:5px;height:0.9px;background:#1a1a1a;"></div>
<div id="t105" class="t " style="left:372.10px;top:155.08px;font-size:9px;color:#8c8c8c;transform:scaleX(0.9576);transform-origin:0 0;">From:</div>
<div id="t106" class="t " style="left:469.20px;top:155.08px;font-size:9px;color:#8c8c8c;transform:scaleX(0.9749);transform-origin:0 0;">To:</div>
<div class="r" style="left:403.4px;top:153px;width:55.60000000000002px;height:16.3px;background:#f7f7f7;border:1px solid #cfcfcf"></div>
<div class="r" style="left:445.3px;top:153.5px;width:13.199999999999989px;height:7.6px;background:#efefef;border:1px solid #d8d8d8"></div>
<div class="r" style="left:445.3px;top:161.2px;width:13.199999999999989px;height:7.6px;background:#efefef;border:1px solid #e0e0e0"></div>
<svg class="r" style="left:448.3px;top:154px;" width="9" height="14" viewBox="0 0 9 14"><path d="M1.5 5.5 L4.5 2.3 L7.5 5.5 Z" fill="#111"/><path d="M1.5 9.5 L4.5 12.5 L7.5 9.5 Z" fill="#777"/></svg>
<div id="t107" class="t " style="left:407.90px;top:158.18px;font-size:9px;color:#a0a0a0;">1</div>
<div class="r" style="left:490.3px;top:153px;width:55.49999999999994px;height:16.3px;background:#f7f7f7;border:1px solid #cfcfcf"></div>
<div class="r" style="left:532.1px;top:153.5px;width:13.199999999999932px;height:7.6px;background:#efefef;border:1px solid #d8d8d8"></div>
<div class="r" style="left:532.1px;top:161.2px;width:13.199999999999932px;height:7.6px;background:#efefef;border:1px solid #e0e0e0"></div>
<svg class="r" style="left:535.1px;top:154px;" width="9" height="14" viewBox="0 0 9 14"><path d="M1.5 5.5 L4.5 2.3 L7.5 5.5 Z" fill="#111"/><path d="M1.5 9.5 L4.5 12.5 L7.5 9.5 Z" fill="#777"/></svg>
<div id="t108" class="t " style="left:494.80px;top:158.18px;font-size:9px;color:#a0a0a0;">1</div>
<div id="t109" class="t " style="left:307.60px;top:178.68px;font-size:9px;color:#000000;transform:scaleX(0.9484);transform-origin:0 0;">Publish what</div>
<div class="r" style="left:359.4px;top:182.2px;width:186.39999999999998px;height:1px;background:#e1e1e1;"></div>
<div class="r" style="left:359.4px;top:183.2px;width:186.39999999999998px;height:1px;background:#fafafa;"></div>
<svg class="r" style="left:315.9px;top:194.5px;" width="12" height="12" viewBox="0 0 12 12"><circle cx="6" cy="6" r="5.2" fill="#fff" stroke="#333333" stroke-width="1"/><circle cx="6" cy="6" r="3" fill="#333"/></svg>
<div id="t110" class="t " style="left:331.00px;top:197.98px;font-size:9px;color:#000000;transform:scaleX(0.9628);transform-origin:0 0;">Document</div>
<div class="r" style="left:331px;top:206.4px;width:6px;height:0.9px;background:#1a1a1a;"></div>
<svg class="r" style="left:315.9px;top:211.3px;" width="12" height="12" viewBox="0 0 12 12"><circle cx="6" cy="6" r="5.2" fill="#fff" stroke="#c6c6c6" stroke-width="1"/></svg>
<div id="t111" class="t " style="left:331.00px;top:214.18px;font-size:9px;color:#939393;transform:scaleX(0.9711);transform-origin:0 0;">Document showing markup</div>
<div id="t112" class="t " style="left:307.60px;top:233.98px;font-size:9px;color:#000000;">Include non-printing information</div>
<div class="r" style="left:436px;top:237.5px;width:109.79999999999995px;height:1px;background:#e1e1e1;"></div>
<div class="r" style="left:436px;top:238.5px;width:109.79999999999995px;height:1px;background:#fafafa;"></div>
<svg class="r" style="left:316px;top:250px;" width="12" height="12" viewBox="0 0 12 12"><rect x="0.5" y="0.5" width="11" height="11" fill="#fff" stroke="#4a4a4a" stroke-width="1"/></svg>
<div id="t113" class="t " style="left:331.00px;top:252.38px;font-size:9px;color:#000000;transform:scaleX(0.9656);transform-origin:0 0;">Create bookmarks using:</div>
<div class="r" style="left:331px;top:260.8px;width:5.5px;height:0.9px;background:#1a1a1a;"></div>
<svg class="r" style="left:331.1px;top:266.2px;" width="12" height="12" viewBox="0 0 12 12"><circle cx="6" cy="6" r="5.2" fill="#fff" stroke="#c6c6c6" stroke-width="1"/><circle cx="6" cy="6" r="3" fill="#c6c6c6"/></svg>
<div id="t114" class="t " style="left:346.20px;top:268.78px;font-size:9px;color:#939393;transform:scaleX(0.9652);transform-origin:0 0;">Headings</div>
<svg class="r" style="left:331.1px;top:282.4px;" width="12" height="12" viewBox="0 0 12 12"><circle cx="6" cy="6" r="5.2" fill="#fff" stroke="#c6c6c6" stroke-width="1"/></svg>
<div id="t115" class="t " style="left:346.20px;top:285.38px;font-size:9px;color:#939393;">Word bookmarks</div>
<svg class="r" style="left:316px;top:300px;" width="12" height="12" viewBox="0 0 12 12"><rect x="0.5" y="0.5" width="11" height="11" fill="#fff" stroke="#4a4a4a" stroke-width="1"/><path d="M2.5 5.8 L4.8 8.1 L9.2 3.4" fill="none" stroke="#333" stroke-width="1.1"/></svg>
<div id="t116" class="t " style="left:331.00px;top:301.88px;font-size:9px;color:#000000;transform:scaleX(0.9853);transform-origin:0 0;">Document properties</div>
<div class="r" style="left:373px;top:310.3px;width:4px;height:0.9px;background:#1a1a1a;"></div>
<svg class="r" style="left:316px;top:317px;" width="12" height="12" viewBox="0 0 12 12"><rect x="0.5" y="0.5" width="11" height="11" fill="#fff" stroke="#a6a6a6" stroke-width="1"/><path d="M2.5 5.8 L4.8 8.1 L9.2 3.4" fill="none" stroke="#333" stroke-width="1.1"/></svg>
<div id="t117" class="t " style="left:331.00px;top:318.88px;font-size:9px;color:#000000;transform:scaleX(0.9749);transform-origin:0 0;">Document structure tags for accessibility</div>
<div class="r" style="left:351px;top:327.3px;width:6.5px;height:0.9px;background:#1a1a1a;"></div>
<div id="t118" class="t " style="left:307.60px;top:338.18px;font-size:9px;color:#000000;transform:scaleX(0.9448);transform-origin:0 0;">PDF options</div>
<div class="r" style="left:357.4px;top:341.4px;width:188.39999999999998px;height:1px;background:#e1e1e1;"></div>
<div class="r" style="left:357.4px;top:342.4px;width:188.39999999999998px;height:1px;background:#fafafa;"></div>
<svg class="r" style="left:316px;top:356px;" width="12" height="12" viewBox="0 0 12 12"><rect x="0.5" y="0.5" width="11" height="11" fill="#fff" stroke="#d6d6d6" stroke-width="1"/></svg>
<div id="t119" class="t " style="left:331.00px;top:356.78px;font-size:9px;color:#939393;transform:scaleX(0.9548);transform-origin:0 0;">PDF/A compliant</div>
<svg class="r" style="left:316px;top:371px;" width="12" height="12" viewBox="0 0 12 12"><rect x="0.5" y="0.5" width="11" height="11" fill="#fff" stroke="#4a4a4a" stroke-width="1"/></svg>
<div id="t120" class="t " style="left:331.00px;top:373.18px;font-size:9px;color:#000000;transform:scaleX(0.9940);transform-origin:0 0;">Optimize for image quality</div>
<div class="r" style="left:409.5px;top:381.6px;width:4.5px;height:0.9px;background:#1a1a1a;"></div>
<svg class="r" style="left:316px;top:388px;" width="12" height="12" viewBox="0 0 12 12"><rect x="0.5" y="0.5" width="11" height="11" fill="#fff" stroke="#4a4a4a" stroke-width="1"/><path d="M2.5 5.8 L4.8 8.1 L9.2 3.4" fill="none" stroke="#333" stroke-width="1.1"/></svg>
<div id="t121" class="t " style="left:331.00px;top:389.98px;font-size:9px;color:#000000;transform:scaleX(0.9826);transform-origin:0 0;">Bitmap text when fonts may not be embedded</div>
<div class="r" style="left:367.5px;top:398.40000000000003px;width:4.5px;height:0.9px;background:#1a1a1a;"></div>
<svg class="r" style="left:316px;top:405px;" width="12" height="12" viewBox="0 0 12 12"><rect x="0.5" y="0.5" width="11" height="11" fill="#fff" stroke="#7fb2ea" stroke-width="1"/><path d="M2.5 5.8 L4.8 8.1 L9.2 3.4" fill="none" stroke="#2a7fd4" stroke-width="1.1"/></svg>
<div id="t122" class="t " style="left:331.00px;top:406.68px;font-size:9px;color:#000000;transform:scaleX(0.9763);transform-origin:0 0;">Encrypt the document with a password</div>
<div class="r" style="left:336.5px;top:415.1px;width:5px;height:0.9px;background:#1a1a1a;"></div>
<div class="r" style="left:329.5px;top:404.4px;width:153.2px;height:12.7px;background:transparent;border:1px dotted #4a4a4a"></div>
<div class="r" style="left:386.3px;top:424.5px;width:74.2px;height:18.3px;background:#e1e1e1;border:2px solid #0078d7"></div>
<div class="r" style="left:471.2px;top:424.5px;width:73.6px;height:18.3px;background:#e1e1e1;border:1px solid #adadad"></div>
<div id="t123" class="t " style="left:417.50px;top:430.58px;font-size:9px;color:#000000;transform:scaleX(0.9689);transform-origin:0 0;">OK</div>
<div id="t124" class="t " style="left:495.80px;top:430.58px;font-size:9px;color:#000000;transform:scaleX(0.9129);transform-origin:0 0;">Cancel</div>
</body></html>
